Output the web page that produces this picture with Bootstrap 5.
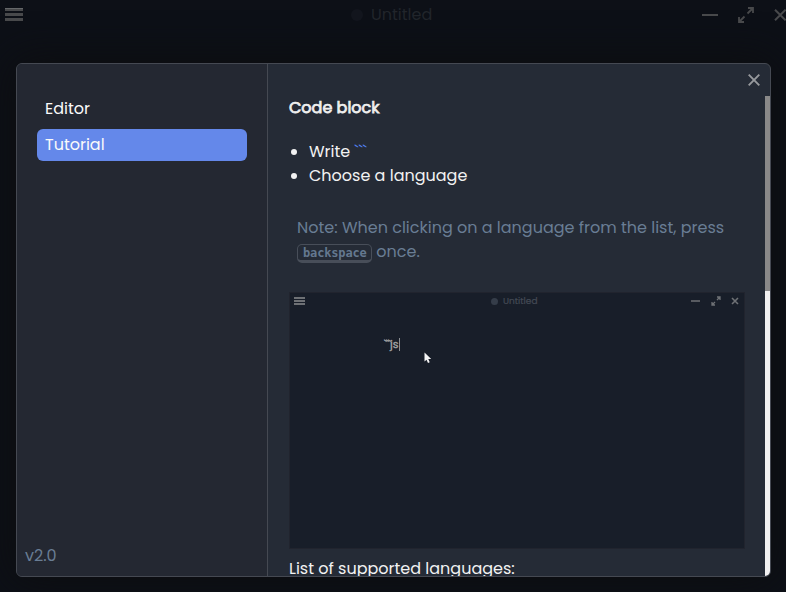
<!DOCTYPE html>
<html lang="en">
<head>
<meta charset="utf-8">
<meta name="viewport" content="width=device-width, initial-scale=1">
<title>Settings</title>
<link href="https://cdn.jsdelivr.net/npm/bootstrap@5.3.0/dist/css/bootstrap.min.css" rel="stylesheet">
<style>
body{width:786px;height:592px;background:#0d1017;font:400 16px/24px Poppins,Inter,sans-serif;color:#f2f2f2}
svg{display:block;flex:none}
.titlebar{height:30px;padding-left:5px;color:#48494b}
.menu-icon{margin-bottom:1px}
.doc-title{color:#21252b;margin-left:328px}
.doc-dot{width:12px;height:12px;background:#12151d;margin-right:8px}
.window-buttons{gap:20px;margin-right:-1px}
.settings{width:755px;height:514px;margin:33px 0 0 16px;border:1px solid #454952;border-radius:6px;background:#252b36;box-shadow:0 0 40px 4px #0d0e10}
.side{width:251px;background:#242832;border-right:1px solid #454952;padding:28px 20px 8px}
.side-item{height:32px;padding:4px 8px;margin-bottom:5px;border-radius:6px;color:#fafafa}
.side-item:first-child{padding-top:5px}
.version{color:#697d94;margin-left:-12px}
.side-item.active{background:#6488ea}
.topline{height:32px;padding-right:10px;color:#97999d}
.pane{height:480px;padding:0 20px 0 21px}
.pane h1{font-size:16px;font-weight:400;-webkit-text-stroke:.75px #eee;line-height:24px;margin:0 0 20px}
.pane ul{padding-left:20px;margin:0 0 28px}
.ticks{color:#5280f0}
.note{height:48px;color:#697d94;padding-left:8px;margin:0 0 28px;white-space:nowrap}
kbd.key{display:inline-block;vertical-align:0;font:700 12px/16px "DejaVu Sans Mono",monospace;letter-spacing:-.15px;color:#64788f;background:none;border:1px solid #484e59;border-bottom-width:3px;border-radius:5px;padding:0 5px;width:75px;height:19px}
.demo{width:456px;height:257px;background:#181e29;border:1px solid #21242e;color:#6e7175}
.demo-bar{height:16px;padding:0 4px}
.demo-title{font-size:9px;line-height:16px;color:#444a55;-webkit-text-stroke:.2px #444a55;margin-left:186px}
.demo-dot{width:7px;height:7px;background:#353d49;margin-right:5px}
.demo-buttons{gap:10px;margin-right:1px}
.typed{font-size:11px;line-height:13px;color:#aaa;-webkit-text-stroke:.3px #aaa;padding:29px 0 0 94px}
.typed-ticks{letter-spacing:-.8px}
.caret{width:1px;height:13px;background:#8b8e92}
.pointer{left:134px;top:59px}
.track{width:5px;height:480px;background:#f1f0f0}
.thumb{height:195px;background:#8a8989}
</style>
</head>
<body class="overflow-hidden">
<header class="titlebar d-flex align-items-center">
<svg class="menu-icon" width="18" height="15" viewBox="0 0 18 15" fill="currentColor"><path d="M0 1h18v3H0zM0 6h18v3H0zM0 11h18v3H0z"/><path d="M0 1h18v1H0z" fill="#66686a"/></svg>
<div class="doc-title d-flex align-items-center"><i class="doc-dot rounded-circle"></i>Untitled</div>
<div class="window-buttons d-flex align-items-center ms-auto">
<svg width="16" height="16" viewBox="0 0 16 16" stroke="currentColor" stroke-width="2"><path d="M0 8h16"/></svg>
<svg width="16" height="16" viewBox="0 0 16 16" fill="none" stroke="currentColor" stroke-width="1.8"><path d="M9.500 6.500l2-2M13 3l1.500-1.500M10 1h5v5M6.500 9.500l-2 2M3 13l-1.500 1.500M1 10v5h5M11 5l3-3M5 11l-3 3"/></svg>
<svg width="13" height="12" viewBox="0 0 13 12" fill="none" stroke="currentColor" stroke-width="2"><path d="M1 .7l10.600 10.600M11.600.7L1 11.300"/></svg>
</div>
</header>
<main class="settings d-flex overflow-hidden">
<nav class="side d-flex flex-column flex-shrink-0">
<div class="side-item">Editor</div>
<div class="side-item active">Tutorial</div>
<div class="version mt-auto">v2.0</div>
</nav>
<section class="flex-grow-1">
<div class="topline d-flex align-items-center justify-content-end"><svg width="12" height="12" viewBox="0 0 12 12" fill="none" stroke="currentColor" stroke-width="1.900"><path d="M.7.7l10.600 10.600M11.300.7L.7 11.300"/></svg></div>
<div class="d-flex">
<div class="pane flex-grow-1 overflow-hidden">
<h1>Code block</h1>
<ul><li>Write <span class="ticks">```</span></li><li>Choose a language</li></ul>
<p class="note">Note: When clicking on a language from the list, press<br><kbd class="key">backspace</kbd> once.</p>
<div class="demo position-relative">
<div class="demo-bar d-flex align-items-center">
<svg width="11" height="8" viewBox="0 0 11 8" fill="currentColor"><path d="M0 0h11v2H0zM0 3h11v2H0zM0 6h11v2H0z"/></svg>
<div class="demo-title d-flex align-items-center"><i class="demo-dot rounded-circle"></i>Untitled</div>
<div class="demo-buttons d-flex align-items-center ms-auto">
<svg width="10" height="10" viewBox="0 0 10 10" stroke="currentColor" stroke-width="1.500"><path d="M0 5h9"/></svg>
<svg width="10" height="10" viewBox="0 0 10 10" fill="none" stroke="currentColor" stroke-width="1.300"><path d="M6 4l3-3M6 1h3v3M4 6L1 9M1 6v3h3"/></svg>
<svg width="8" height="8" viewBox="0 0 8 8" fill="none" stroke="currentColor" stroke-width="1.600"><path d="M1 1l6 6M7 1L1 7"/></svg>
</div>
</div>
<div class="typed d-flex"><span class="typed-ticks">```</span>js<i class="caret"></i></div>
<svg class="pointer position-absolute" width="8" height="12" viewBox="0 0 8 12"><path d="M.5.500v9l2-1.800 1.500 3.300 1.700-.8L4.300 7h2.900z" fill="#f4f4f4"/></svg>
</div>
<div class="mt-2">List of supported languages:</div>
</div>
<div class="track flex-shrink-0"><div class="thumb"></div></div>
</div>
</section>
</main>
</body>
</html>
